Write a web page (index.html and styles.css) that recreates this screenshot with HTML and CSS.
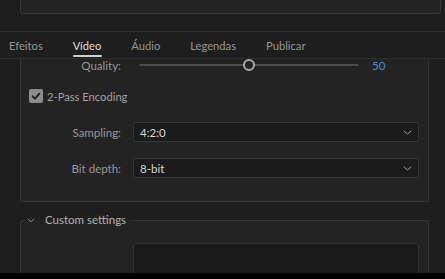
FILE: index.html
```html
<!DOCTYPE html>
<html>
<head>
<meta charset="utf-8">
<link rel="stylesheet" href="styles.css">
</head>
<body>
<div class="app">
  <div class="top-card"></div>
  <nav class="tabs">
    <span class="tab">Efeitos</span>
    <span class="tab active">Vídeo</span>
    <span class="tab">Áudio</span>
    <span class="tab">Legendas</span>
    <span class="tab">Publicar</span>
  </nav>
  <div class="scroll">
    <section class="card">
      <div class="row quality">
        <span class="label">Quality:</span>
        <div class="slider"><span class="knob" style="left: 50%"></span></div>
        <span class="value">50</span>
      </div>
      <label class="check-row">
        <span class="checkbox">
          <svg width="14" height="14" viewBox="0 0 14 14"><path d="M3.6 7.3 L6 9.6 L10.4 4.6" fill="none" stroke="#1e1e1e" stroke-width="1.8" stroke-linecap="round" stroke-linejoin="round"/></svg>
        </span>
        <span class="check-label">2-Pass Encoding</span>
      </label>
      <div class="row select-row first">
        <span class="label">Sampling:</span>
        <div class="select"><span>4:2:0</span>
          <svg width="9" height="5" viewBox="0 0 9 5"><path d="M0.8 0.8 L4.5 4 L8.2 0.8" fill="none" stroke="#9a9a9a" stroke-width="1"/></svg>
        </div>
      </div>
      <div class="row select-row second">
        <span class="label">Bit depth:</span>
        <div class="select"><span>8-bit</span>
          <svg width="9" height="5" viewBox="0 0 9 5"><path d="M0.8 0.8 L4.5 4 L8.2 0.8" fill="none" stroke="#9a9a9a" stroke-width="1"/></svg>
        </div>
      </div>
    </section>
    <fieldset class="group">
      <legend class="legend">
        <svg width="8" height="5" viewBox="0 0 8 5"><path d="M0.7 0.7 L4 3.8 L7.3 0.7" fill="none" stroke="#8a8a8a" stroke-width="1"/></svg>
        <span>Custom settings</span>
      </legend>
      <div class="row args-row">
        <span class="label">Custom args:</span>
        <div class="textarea"></div>
      </div>
    </fieldset>
  </div>
</div>
</body>
</html>
```

FILE: styles.css
```css
* { box-sizing: border-box; }
html, body { margin: 0; padding: 0; }
body {
  background: #000;
  width: 445px;
  height: 279px;
  overflow: hidden;
  font-family: "Lato", "Open Sans", sans-serif;
  font-size: 11.5px;
  color: #9c9c9c;
}
.app {
  height: 273px;
  background: #1e1e1e;
  overflow: hidden;
  display: flex;
  flex-direction: column;
}
.top-card {
  flex: none;
  margin-left: 20px;
  width: 421px;
  height: 14px;
  background: #232323;
  border: 1px solid #383838;
  border-top: none;
  border-radius: 0 0 3px 3px;
}
.tabs {
  flex: none;
  margin-top: 17px;
  height: 28px;
  border-top: 1px solid #2e2e2e;
  border-bottom: 1px solid #2e2e2e;
  display: flex;
  gap: 30px;
  padding-left: 9px;
  font-size: 11.2px;
}
.tab {
  position: relative;
  line-height: 26px;
  padding-top: 1px;
  color: #959595;
  white-space: nowrap;
}
.tab.active { color: #dedede; }
.tab.active::after {
  content: "";
  position: absolute;
  left: 0; right: -1px;
  top: 23px;
  height: 2px;
  background: #cfcfcf;
  border-radius: 1px;
}
.scroll {
  flex: 1;
  overflow: hidden;
}
.card {
  margin-left: 20px;
  width: 409px;
  background: #232323;
  border: 1px solid #363636;
  border-top: none;
  border-radius: 0 0 3px 3px;
  padding: 0 9px 23px 0;
}
.row {
  display: flex;
  align-items: center;
}
.label {
  flex: none;
  width: 100px;
  text-align: right;
  color: #969696;
  white-space: nowrap;
}
.quality { height: 12px; }
.slider {
  position: relative;
  margin-left: 18px;
  width: 220px;
  height: 2px;
  background: #4a4a4a;
  border-radius: 1px;
}
.knob {
  position: absolute;
  top: -5px;
  width: 12px;
  height: 12px;
  margin-left: -6px;
  border-radius: 50%;
  border: 2px solid #a8a8a8;
  background: #232323;
}
.value {
  margin-left: 13px;
  color: #3f8fdc;
}
.check-row {
  margin-top: 18px;
  margin-left: 8px;
  height: 14px;
  display: flex;
  align-items: center;
  gap: 4px;
  font-size: 11.2px;
}
.checkbox {
  width: 14px;
  height: 14px;
  border-radius: 2px;
  background: #8c8c8c;
  display: flex;
}
.check-label { color: #a2a2a2; }
.select-row.first { margin-top: 19px; }
.select-row.second { margin-top: 16px; }
.select {
  margin-left: 12px;
  flex: 1;
  height: 20px;
  background: #1b1b1b;
  border: 1px solid #383838;
  border-radius: 3px;
  display: flex;
  align-items: center;
  justify-content: space-between;
  padding: 0 6px 0 6px;
  color: #d6d6d6;
}
.group {
  margin: 10px 0 0 20px;
  width: 409px;
  padding: 0 9px 0 4px;
  border: 1px solid #363636;
  border-radius: 3px;
  background: #232323;
}
.legend {
  padding: 0 5px 0 2px;
  line-height: 16px;
  display: flex;
  align-items: center;
  gap: 10px;
  color: #b2b2b2;
  font-size: 11.5px;
}
.args-row {
  margin-top: 15px;
  margin-left: -4px;
}
.textarea {
  margin-left: 12px;
  flex: 1;
  height: 66px;
  background: #1a1a1a;
  border: 1px solid #333;
  border-radius: 3px;
}
```
